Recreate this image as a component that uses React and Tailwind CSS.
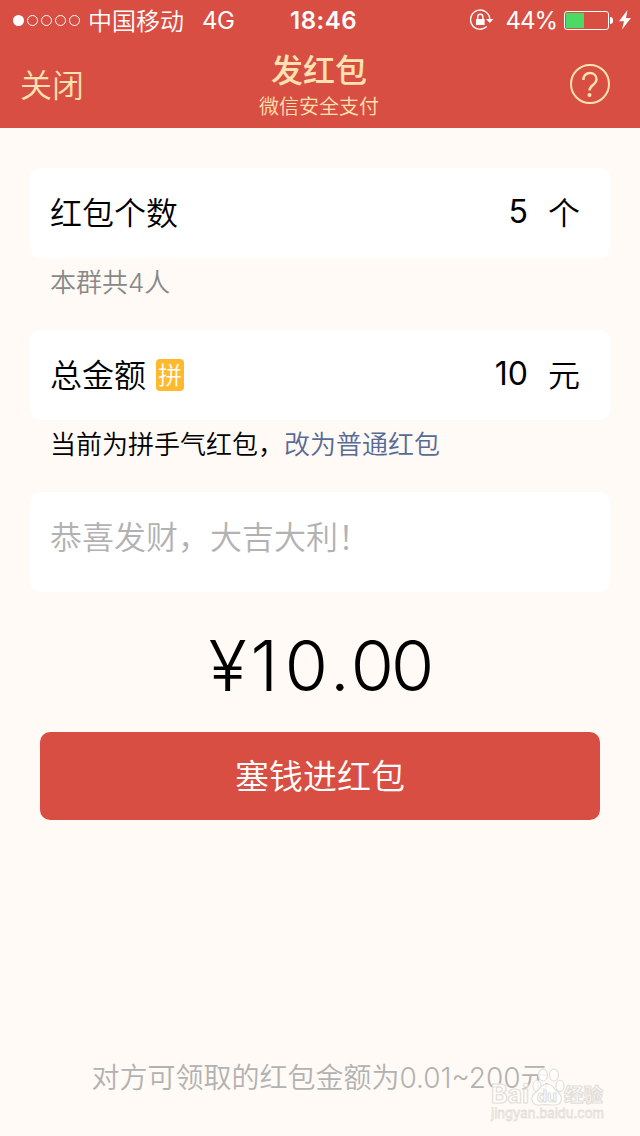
import React from 'react';

function StatusBar() {
  return (
    <div className="flex h-10 items-center text-white">
      <div className="flex flex-1 items-center pl-[13px]">
        <div className="flex gap-[3px]">
          <span className="h-[11px] w-[11px] rounded-full bg-white"></span>
          <span className="h-[11px] w-[11px] rounded-full border border-white"></span>
          <span className="h-[11px] w-[11px] rounded-full border border-white"></span>
          <span className="h-[11px] w-[11px] rounded-full border border-white"></span>
          <span className="h-[11px] w-[11px] rounded-full border border-white"></span>
        </div>
        <span className="ml-2 pt-[3px] text-2xl leading-10 font-[350]">中国移动</span>
        <span className="ml-[18px] pt-[2px] text-2xl leading-10 tracking-[-0.5px]">4G</span>
      </div>
      <span className="pt-[2px] pl-[3px] text-2xl leading-10 font-semibold tracking-[0.5px]">18:46</span>
      <div className="flex flex-1 items-center justify-end pr-[9px]">
        <svg width="24" height="22" viewBox="0 0 24 22" fill="none" stroke="white" strokeWidth="1.4">
          <path d="M16.8 17.6A9.6 9.6 0 1 1 19.8 10.5" />
          <path d="M16 10h7.5l-3.7 4z" fill="white" stroke="none" />
          <rect x="6" y="10" width="8.6" height="6" fill="white" stroke="none" />
          <path d="M7.7 10.5V7.9a2.6 2.6 0 0 1 5.2 0v2.6" />
        </svg>
        <span className="ml-[11px] pt-[2px] text-2xl leading-10 tracking-[-1px]">44%</span>
        <div className="ml-[7px] h-[19px] w-[45px] rounded-[3px] border border-white p-px">
          <div className="h-full w-[18px] bg-[#4cd964]"></div>
        </div>
        <span className="ml-px h-[7px] w-[3px] rounded-r-full bg-white"></span>
        <svg className="ml-[6px]" width="12" height="20" viewBox="0 0 12 20" fill="white">
          <path d="M8.5 0 0 11.2h5L3 19.5 12 8H7z" />
        </svg>
      </div>
    </div>
  );
}

function Header() {
  return (
    <header className="h-32 bg-[#d84e43]">
      <StatusBar />
      <div className="grid h-[88px] grid-cols-3 items-center text-[#ffe2b1]">
        <div className="pt-1 pl-5 text-[32px] leading-[84px] font-[350]">关闭</div>
        <div className="pt-[6px] pr-[2px] text-center">
          <h1 className="text-[32px] leading-[40px] font-medium">发红包</h1>
          <p className="text-xl leading-8 font-[350]">微信安全支付</p>
        </div>
        <div className="flex justify-end pr-[30px]">
          <svg width="40" height="40" viewBox="0 0 40 40" fill="none" stroke="currentColor" strokeWidth="2">
            <circle cx="20" cy="20" r="19" />
            <path d="M13.4 16c0-4.2 2.6-7 6.5-7s6.6 2.6 6.6 6.2c0 5.6-7 5.9-7 11.3" strokeWidth="2.4" />
            <circle cx="19.5" cy="31" r="2" fill="currentColor" stroke="none" />
          </svg>
        </div>
      </div>
    </header>
  );
}

function Watermark() {
  return (
    <div className="absolute right-[34px] bottom-[14px] h-[68px] w-[116px]">
      <svg width="116" height="68" viewBox="0 0 116 68" fill="white" fillOpacity="0.85" stroke="#e3dfdb" strokeWidth="1.2">
        <ellipse cx="47" cy="32" rx="4" ry="5.5" />
        <ellipse cx="53" cy="21" rx="4.5" ry="6" />
        <ellipse cx="64" cy="21" rx="4.5" ry="6" />
        <ellipse cx="70" cy="32" rx="4" ry="5.5" />
        <path d="M57 30c5 0 7 5 11 8 5 5 5 13-4 13-4 0-10-1-14 0-9 1-10-8-5-12 5-4 6-9 12-9z" />
        <text x="1" y="49" fontSize="25" fontWeight="700" fontFamily="Inter, sans-serif" textLength="38" lengthAdjust="spacingAndGlyphs">Bai</text>
        <text x="47" y="48" fontSize="16" fontWeight="700" fontFamily="Inter, sans-serif" textLength="20" lengthAdjust="spacingAndGlyphs">du</text>
        <text x="74" y="48" fontSize="19.5" fontWeight="700" fontFamily="'Noto Sans CJK SC', sans-serif">经验</text>
        <text x="1" y="64" fontSize="13" fontFamily="Inter, sans-serif" strokeWidth="0.8" textLength="113">jingyan.baidu.com</text>
      </svg>
    </div>
  );
}

function App() {
  return (
    <div className="relative flex h-[1136px] w-[640px] flex-col overflow-hidden bg-[#fffaf5] font-['Inter','Noto_Sans_CJK_SC',sans-serif] whitespace-nowrap text-black">
      <Header />
      <main className="flex flex-1 flex-col px-[30px] pt-10">
        <div className="flex h-[90px] items-center rounded-[10px] bg-white pr-[30px] pl-5 text-[32px] font-[350]">
          <span className="flex-1 pt-[2px]">红包个数</span>
          <span className="pb-[2px] font-normal">5</span>
          <span className="ml-5 pt-[2px]">个</span>
        </div>
        <p className="h-[72px] pl-5 text-[26px] leading-[50px] font-[350] text-[#888888]">本群共4人</p>

        <div className="flex h-[90px] items-center rounded-[10px] bg-white pr-[30px] pl-5 text-[32px] font-[350]">
          <span className="pt-[2px]">总金额</span>
          <span className="ml-[10px] h-8 w-7 rounded-[4px] bg-[#ffb92c] pt-px text-center text-2xl leading-8 text-white">拼</span>
          <span className="ml-auto pb-[2px] font-normal">10</span>
          <span className="ml-5 pt-[2px]">元</span>
        </div>
        <p className="h-[72px] pl-5 text-[26px] leading-[50px] font-[350]">
          当前为拼手气红包，<a className="text-[#576b95]">改为普通红包</a>
        </p>

        <div className="h-[100px] rounded-[10px] bg-white pl-5 text-[32px] leading-[92px] font-[350] text-[#b2b2b2]">恭喜发财，大吉大利！</div>

        <div className="mt-[28px] h-[112px] text-center text-[70px] leading-[92px] font-light tracking-[-3px]">
          ¥<span className="inline-block w-[41px] pr-[3px] text-center">1</span>0<span className="mr-[4px] ml-[5px]">.</span>00
        </div>

        <button className="mx-[10px] h-[88px] rounded-[10px] bg-[#d84e43] pt-[2px] text-[34px] leading-[86px] font-[350] text-white">塞钱进红包</button>

        <p className="mt-auto mb-[36px] text-center text-[28px] leading-[44px] font-[350] text-[#b2b2b2]">对方可领取的红包金额为0.01~200元</p>
      </main>
      <Watermark />
    </div>
  );
}

export default App;
